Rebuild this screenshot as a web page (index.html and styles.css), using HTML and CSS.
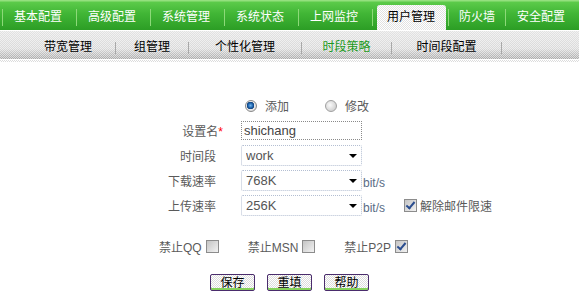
FILE: index.html
```html
<!DOCTYPE html>
<html lang="zh-CN">
<head>
    <meta charset="UTF-8">
    <title>时段策略</title>
    <link rel="stylesheet" href="styles.css">
</head>
<body>
    <div class="topnav">
        <span class="sep"></span>
        <a class="tab" href="#">基本配置</a><span class="sep"></span>
        <a class="tab" href="#">高级配置</a><span class="sep"></span>
        <a class="tab" href="#">系统管理</a><span class="sep"></span>
        <a class="tab" href="#">系统状态</a><span class="sep"></span>
        <a class="tab" href="#">上网监控</a><span class="sep"></span>
        <a class="tab active" href="#">用户管理</a><span class="sep"></span>
        <a class="tab short" href="#">防火墙</a><span class="sep"></span>
        <a class="tab" href="#">安全配置</a>
    </div>

    <div class="subnav">
        <a href="#">带宽管理</a><span class="sep"></span>
        <a href="#">组管理</a><span class="sep"></span>
        <a href="#">个性化管理</a><span class="sep"></span>
        <a class="current" href="#">时段策略</a><span class="sep"></span>
        <a href="#">时间段配置</a><span class="sep"></span>
    </div>
    <div class="subline"></div>

    <form class="policy">
        <div class="row">
            <span class="label"></span>
            <label class="opt"><input type="radio" name="mode" checked>添加</label>
            <label class="opt"><input type="radio" name="mode">修改</label>
        </div>
        <div class="row">
            <span class="label">设置名<span class="req">*</span></span>
            <input class="text" type="text" value="shichang">
        </div>
        <div class="row">
            <span class="label">时间段</span>
            <span class="sel"><select><option>work</option></select></span>
        </div>
        <div class="row">
            <span class="label">下载速率</span>
            <span class="sel"><select><option>768K</option></select></span>
            <span class="unit">bit/s</span>
        </div>
        <div class="row">
            <span class="label">上传速率</span>
            <span class="sel"><select><option>256K</option></select></span>
            <span class="unit">bit/s</span>
            <label class="mail"><input type="checkbox" checked>解除邮件限速</label>
        </div>

        <div class="checks">
            <label>禁止QQ<input type="checkbox"></label>
            <label>禁止MSN<input type="checkbox"></label>
            <label>禁止P2P<input type="checkbox" checked></label>
        </div>

        <div class="actions">
            <button type="button">保存</button>
            <button type="button">重填</button>
            <button type="button">帮助</button>
        </div>
    </form>
</body>
</html>
```

FILE: styles.css
```css
body {
    margin: 0;
    font-family: "Liberation Sans", "Noto Sans CJK SC", sans-serif;
    font-size: 12px;
    color: #5a5a5a;
    background: #fff;
}

/* main menu */
.topnav {
    display: flex;
    align-items: flex-end;
    height: 30px;
    background: linear-gradient(#94e07e 0, #94e07e 1px, #5ccb4a 2px, #41b636 45%, #2c9d25 100%);
}
.topnav .sep {
    width: 1px;
    height: 17px;
    margin: 0 0 4px;
    background: #8cd978;
    align-self: flex-end;
}
.topnav .sep:first-child {
    margin-left: 2px;
}
.tab {
    height: 25px;
    line-height: 25px;
    padding: 0 14px 0 11px;
    color: #fff;
    text-decoration: none;
}
.tab.active {
    margin: 0 2px 0 4px;
    padding: 0 11px 0 10px;
    color: #000;
    border-radius: 3px 3px 0 0;
    background: repeating-conic-gradient(#fff 0 25%, #e2e2e2 0 50%) 0 0 / 2px 2px;
}
.tab.short {
    padding: 0 10px 0 10px;
}

/* sub menu */
.subnav {
    display: grid;
    grid-template-columns: 94px 1px 72px 1px 112px 1px 89px 1px 109px 1px;
    align-items: center;
    height: 28px;
    padding-left: 21px;
    margin-top: 1px;
    background:
        repeating-conic-gradient(rgba(255,255,255,0.55) 0 25%, transparent 0 50%) 0 0 / 2px 2px,
        linear-gradient(#e2e2e2 0, #dadada 62%, #c4c4c4 78%, #aaaaaa 100%);
}
.subnav a {
    text-align: center;
    color: #000;
    text-decoration: none;
    line-height: 28px;
    padding-top: 2px;
}
.subnav a.current {
    color: #1c9a1c;
}
.subnav .sep {
    height: 12px;
    margin-top: 4px;
    background: #a8a8a8;
}
.subline {
    height: 2px;
    margin-top: 1px;
    background: repeating-conic-gradient(#fff 0 25%, #dcdcdc 0 50%) 0 0 / 2px 2px;
}

/* form */
.policy {
    margin-top: 31px;
}
.row {
    display: flex;
    align-items: center;
    height: 25px;
}
.label {
    flex: none;
    width: 216px;
    margin-right: 25px;
    text-align: right;
}
.req {
    color: #f00;
    margin-right: -7px;
}
.opt {
    display: flex;
    align-items: center;
    margin-right: 32px;
}
.opt input {
    margin: 0 8px 0 4px;
}
input[type="radio"] {
    appearance: none;
    width: 12px;
    height: 12px;
    border: 1px solid #a0a0a0;
    border-radius: 50%;
    background: radial-gradient(circle at 40% 40%, #fafafa 0, #d4d4d4 70%);
}
input[type="radio"]:checked {
    border-color: #8a8a8a;
    background: radial-gradient(circle at 45% 45%, #6fb4ee 0, #1b5fa8 2.5px, #0e3f7a 3.5px, #eaeaea 4px, #c8c8c8 100%);
}
input[type="checkbox"] {
    appearance: none;
    position: relative;
    width: 13px;
    height: 13px;
    border: 1px solid #8c8c8c;
    background: linear-gradient(135deg, #c4c4c4, #f2f2f2);
}
input[type="checkbox"]:checked::after {
    content: "";
    position: absolute;
    left: 3px;
    top: 0;
    width: 3px;
    height: 7px;
    border: solid #2a4d8f;
    border-width: 0 2px 2px 0;
    transform: rotate(40deg);
}
.text {
    box-sizing: border-box;
    width: 121px;
    height: 19px;
    padding: 0 2px;
    border: 1px dotted #8a8a8a;
    font: 13px "Liberation Sans", sans-serif;
    color: #444;
    outline: none;
}
.sel {
    position: relative;
    display: inline-block;
}
.sel select {
    box-sizing: border-box;
    width: 121px;
    height: 21px;
    padding: 0 4px;
    border: 1px dotted #b3bed2;
    border-radius: 2px;
    background: #fff;
    font: 13px "Liberation Sans", sans-serif;
    color: #555;
    appearance: none;
    outline: none;
}
.sel::after {
    content: "";
    position: absolute;
    right: 5px;
    top: 9px;
    border-left: 4px solid transparent;
    border-right: 4px solid transparent;
    border-top: 4px solid #000;
}
.unit {
    align-self: flex-end;
    margin: 0 0 3px 1px;
    line-height: 14px;
    color: #5a6d86;
}
.mail {
    display: flex;
    align-items: center;
    margin-left: 19px;
}
.mail input {
    margin: 0 3px 0 0;
}
.checks {
    display: flex;
    align-items: center;
    height: 24px;
    margin-top: 16px;
    padding-left: 159px;
}
.checks label {
    display: flex;
    align-items: center;
    margin-right: 29px;
}
.checks input {
    margin: 0 0 0 4px;
}
.actions {
    display: flex;
    justify-content: center;
    gap: 12px;
    margin-top: 16px;
}
.actions button {
    box-sizing: border-box;
    width: 45px;
    height: 17px;
    padding: 0;
    border: 1px solid #4a2c6c;
    border-radius: 2px;
    box-shadow: inset 0 -2px 0 #86d35c;
    background: repeating-conic-gradient(#fff 0 25%, #dcdcdc 0 50%) 0 0 / 2px 2px;
    font: 12px "Liberation Sans", "Noto Sans CJK SC", sans-serif;
    line-height: 14px;
    color: #000;
}
```
